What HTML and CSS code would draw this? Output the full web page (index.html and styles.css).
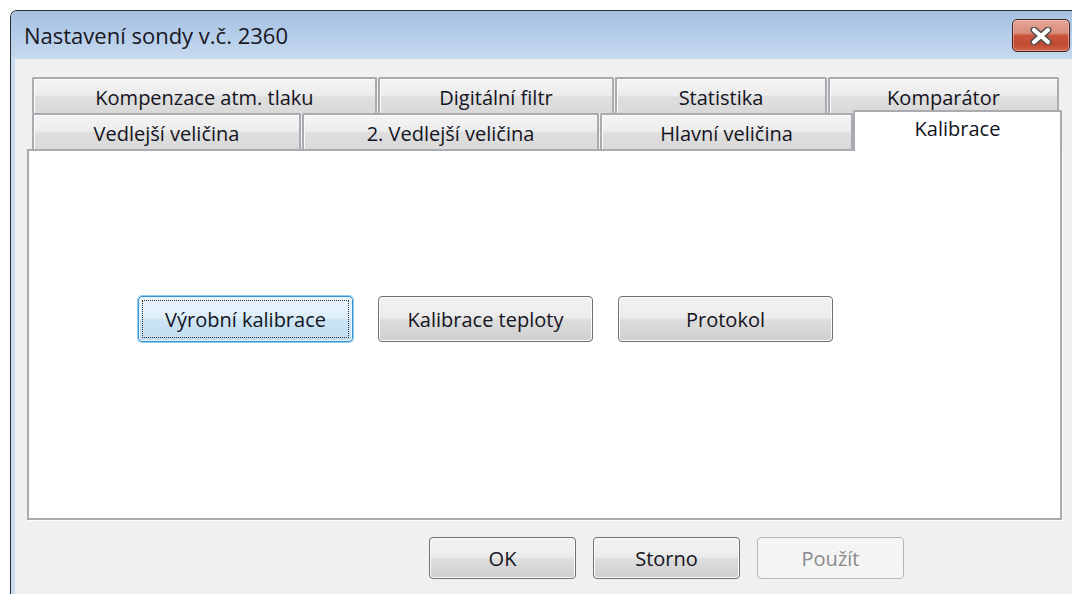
FILE: index.html
```html
<!DOCTYPE html>
<html lang="cs">
<head>
<meta charset="utf-8">
<title>Nastavení sondy</title>
<link rel="stylesheet" href="styles.css">
</head>
<body>
<div class="window">
  <div class="titlebar">
    <span class="title">Nastavení sondy v.č. 2360</span>
    <button class="close" aria-label="Zavřít">
      <svg width="26" height="18" viewBox="0 0 26 18">
        <path d="M6 3 L20 15 M20 3 L6 15" stroke="#55504f" stroke-width="7" stroke-linecap="round"/>
        <path d="M6 3 L20 15 M20 3 L6 15" stroke="#ffffff" stroke-width="4.2" stroke-linecap="round"/>
      </svg>
    </button>
  </div>
  <div class="frame">
    <div class="client">
      <div class="tabctl">
        <div class="tab-row">
          <div class="tab w-komp">Kompenzace atm. tlaku</div>
          <div class="tab w-filtr">Digitální filtr</div>
          <div class="tab w-stat">Statistika</div>
          <div class="tab w-kompar">Komparátor</div>
        </div>
        <div class="tab-row">
          <div class="tab w-vedl">Vedlejší veličina</div>
          <div class="tab w-vedl2">2. Vedlejší veličina</div>
          <div class="tab w-hlav">Hlavní veličina</div>
          <div class="tab selected">Kalibrace</div>
        </div>
        <div class="panel">
          <div class="panel-buttons">
            <button class="btn big focused"><span class="focus-rect">Výrobní kalibrace</span></button>
            <button class="btn big">Kalibrace teploty</button>
            <button class="btn big">Protokol</button>
          </div>
        </div>
      </div>
      <div class="dialog-buttons">
        <button class="btn small">OK</button>
        <button class="btn small">Storno</button>
        <button class="btn small" disabled>Použít</button>
      </div>
    </div>
  </div>
</div>
</body>
</html>
```

FILE: styles.css
```css
html, body {
  margin: 0;
  padding: 0;
  background: #ffffff;
  overflow: hidden;
  width: 1072px;
  height: 594px;
}

body {
  font-family: "Open Sans", "Noto Sans", sans-serif;
  color: #14141e;
}

.window {
  margin: 10px 0 0 10px;
  width: 1066px;
  border-top: 1px solid #262a30;
  border-left: 1px solid #262a30;
  border-top-left-radius: 7px;
  overflow: hidden;
}

/* caption */
.titlebar {
  height: 48px;
  display: flex;
  align-items: center;
  justify-content: space-between;
  padding: 0 7px 0 13px;
  background: linear-gradient(to bottom, #a4bfdf 0%, #b4cce8 45%, #c6d9ef 100%);
}

.title {
  font-size: 22px;
  color: #17171f;
  margin-top: -1px;
}

.close {
  width: 58px;
  height: 33px;
  margin-top: 1px;
  padding: 0;
  border: 1px solid #4a2320;
  border-radius: 5px;
  box-shadow: inset 0 0 0 1px rgba(255, 220, 210, 0.45);
  background: linear-gradient(to bottom, #e4a595 0%, #d98e7e 42%, #c9543c 50%, #c24a32 80%, #d0674c 100%);
  display: flex;
  align-items: center;
  justify-content: center;
}

/* window frame around the client area */
.frame {
  background: #c9dcf1;
  padding-left: 4px;
}

.client {
  background: #f0f0f0;
  height: 535px;
  padding: 18px 0 0 12px;
}

/* tab control */
.tabctl {
  width: 1035px;
  display: flex;
  flex-direction: column;
}

.tab-row {
  display: flex;
  padding-left: 5px;
  height: 36px;
}

.tab {
  box-sizing: border-box;
  height: 36px;
  border: 2px solid #a9abb0;
  border-bottom: none;
  border-radius: 2px 2px 0 0;
  background: linear-gradient(to bottom, #f4f4f4 0%, #ececec 48%, #dfdfdf 52%, #d9d9d9 100%);
  box-shadow: inset 1px 1px 0 #fbfbfb;
  font-size: 20px;
  display: flex;
  align-items: center;
  justify-content: center;
  padding-top: 2px;
}

.tab + .tab {
  margin-left: 1px;
}

.w-komp { width: 345px; }
.w-filtr { width: 236px; }
.w-stat { width: 212px; }
.w-kompar { width: 231px; }

.w-vedl { width: 269px; }
.w-vedl2 { width: 297px; }
.w-hlav { width: 253px; }

.tab-row .tab.selected {
  position: relative;
  z-index: 1;
  width: 209px;
  height: 41px;
  margin-top: -3px;
  margin-left: 0;
  background: #ffffff;
  box-shadow: none;
  align-items: flex-start;
  padding-top: 3px;
}

.panel {
  box-sizing: border-box;
  height: 371px;
  border: 2px solid #a9abb0;
  background: #ffffff;
  box-shadow: 1px 1px 0 #fdfdfd;
}

.panel-buttons {
  display: flex;
  gap: 25px;
  padding: 145px 0 0 109px;
}

/* push buttons */
.btn {
  font-family: "Open Sans", "Noto Sans", sans-serif;
  color: #14141e;
  border: 1px solid #707070;
  border-radius: 4px;
  box-shadow: inset 0 0 0 1px #fbfbfb;
  background: linear-gradient(to bottom, #f2f2f2 0%, #ebebeb 48%, #dddddd 52%, #cfcfcf 100%);
  padding: 0;
  display: flex;
  align-items: center;
  justify-content: center;
}

.btn.big {
  width: 215px;
  height: 46px;
  font-size: 20px;
}

.btn.small {
  width: 147px;
  height: 42px;
  font-size: 20px;
}

.btn.focused {
  border-color: #3d8ec9;
  box-shadow: 0 0 0 1px #8fd0f3, inset 0 0 0 1px #e8f5fd;
  background: linear-gradient(to bottom, #eaf5fc 0%, #ddeef9 48%, #cbe4f5 52%, #c3def2 100%);
}

.focus-rect {
  box-sizing: border-box;
  width: calc(100% - 6px);
  height: calc(100% - 6px);
  border: 1px dotted #303030;
  display: flex;
  align-items: center;
  justify-content: center;
}

.btn:disabled {
  color: #8a8a8a;
  border-color: #b5b8bb;
  box-shadow: none;
  background: #f4f4f4;
}

.dialog-buttons {
  display: flex;
  gap: 17px;
  padding: 17px 0 0 402px;
}
```
